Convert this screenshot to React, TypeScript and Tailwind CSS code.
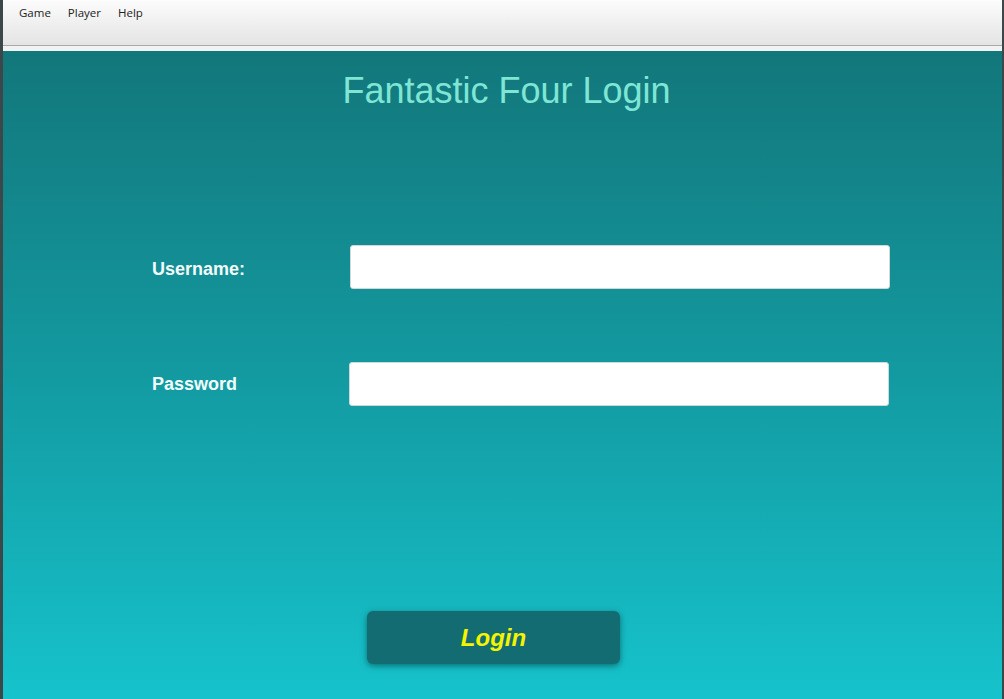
export default function App() {
  return (
    <div className="flex h-[699px] w-[1004px] overflow-hidden bg-[#3b4749] font-['Liberation_Sans',Arial,sans-serif]">
      <div className="ml-[3px] mr-[2px] flex flex-1 flex-col">
        <div className="flex h-[45px] items-start gap-[17px] bg-gradient-to-b from-[#fcfcfc] to-[#e4e4e4] pl-[16px] pt-[4px] font-['Open_Sans',sans-serif] text-[11.5px] text-[#222]">
          <span>Game</span>
          <span>Player</span>
          <span>Help</span>
        </div>
        <div className="h-[1px] bg-[#a9a9a9]" />
        <div className="h-[5px] bg-[#f2f2f2]" />
        <div className="flex flex-1 flex-col bg-gradient-to-b from-[#12777b] via-[#139aa1] to-[#16c3cc]">
          <h1 className="mt-[19px] pl-[8px] text-center text-[36px] leading-[42px] text-[#7fe6d5]">Fantastic Four Login</h1>
          <div className="mt-[133px] flex items-center pl-[149px]">
            <span className="mt-[4px] w-[198px] text-[18px] font-bold text-[#f2fbfb]">Username:</span>
            <div className="h-[44px] w-[540px] rounded-[3px] border border-[#d0d8d8] bg-white" />
          </div>
          <div className="mt-[73px] flex items-center pl-[149px]">
            <span className="w-[197px] text-[18px] font-bold text-[#f2fbfb]">Password</span>
            <div className="h-[44px] w-[540px] rounded-[3px] border border-[#d0d8d8] bg-white" />
          </div>
          <div className="mt-[205px] flex pl-[364px]">
            <button className="flex h-[53px] w-[253px] items-center justify-center rounded-[6px] bg-[#136c71] text-[24px] font-bold italic text-[#f4f400] shadow-[0_2px_6px_rgba(0,60,64,0.6)]">
              Login
            </button>
          </div>
        </div>
      </div>
    </div>
  );
}
